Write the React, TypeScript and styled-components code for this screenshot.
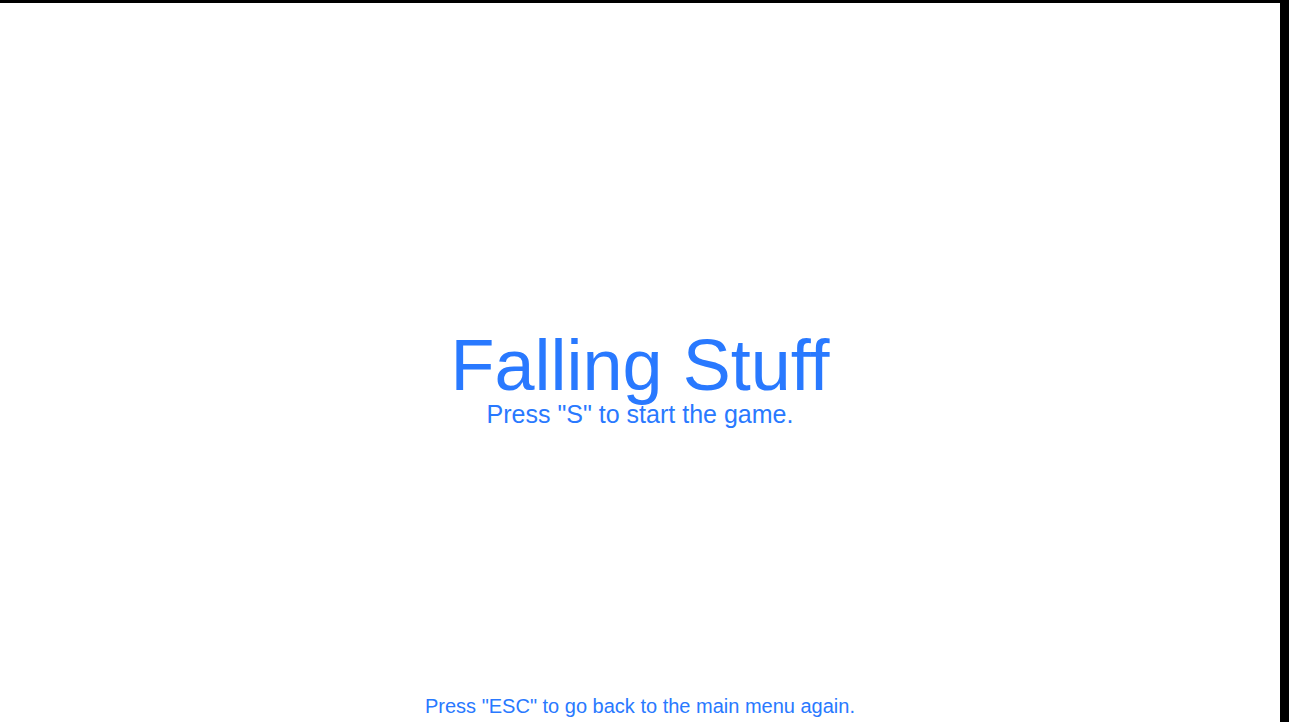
import React from "react";
import styled, { createGlobalStyle } from "styled-components";

const GlobalStyle = createGlobalStyle`
  html, body {
    margin: 0;
    padding: 0;
    background: #000000;
    overflow: hidden;
  }
  body {
    font-family: "Liberation Sans", Arial, sans-serif;
  }
`;

const Screen = styled.main`
  box-sizing: border-box;
  width: 1280px;
  height: 719px;
  margin-top: 3px;
  background: #ffffff;
  display: flex;
  flex-direction: column;
  align-items: center;
  padding-top: 326px;
  padding-bottom: 6px;
  color: #2979ff;
  font-family: "Liberation Sans", Arial, sans-serif;
`;

const Title = styled.h1`
  margin: 0;
  font-size: 72px;
  line-height: 72px;
  font-weight: 400;
`;

const Subtitle = styled.p`
  margin: 1px 0 0;
  font-size: 25px;
  line-height: 25px;
`;

const Footer = styled.p`
  margin: auto 0 0;
  font-size: 20px;
  line-height: 20px;
`;

export default function App() {
  return (
    <>
      <GlobalStyle />
      <Screen>
        <Title>Falling Stuff</Title>
        <Subtitle>Press "S" to start the game.</Subtitle>
        <Footer>Press "ESC" to go back to the main menu again.</Footer>
      </Screen>
    </>
  );
}
